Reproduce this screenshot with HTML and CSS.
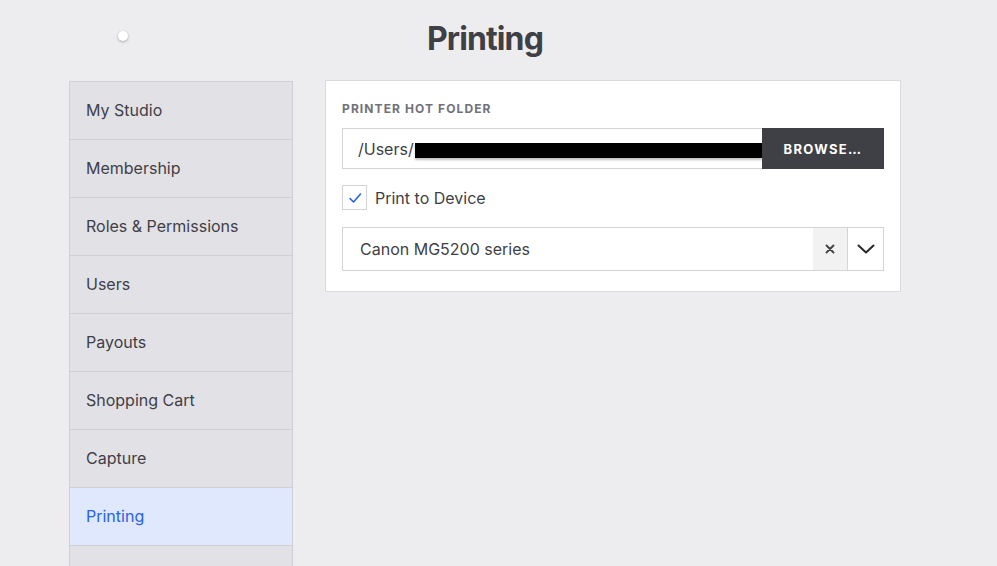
FILE: index.html
```html
<!DOCTYPE html>
<html lang="en">
<head>
    <meta charset="UTF-8">
    <meta name="viewport" content="width=device-width, initial-scale=1.0">
    <title>Printing</title>
    <link rel="stylesheet" href="styles.css">
</head>
<body>

<div class="page">
    <div class="header">
        <span class="knob"></span>
        <h1>Printing</h1>
    </div>

    <div class="layout">
        <ul class="sidebar">
            <li><a href="#">My Studio</a></li>
            <li><a href="#">Membership</a></li>
            <li><a href="#">Roles &amp; Permissions</a></li>
            <li><a href="#">Users</a></li>
            <li><a href="#">Payouts</a></li>
            <li><a href="#">Shopping Cart</a></li>
            <li><a href="#">Capture</a></li>
            <li class="active"><a href="#">Printing</a></li>
            <li></li>
        </ul>

        <div class="panel">
            <div class="field-label">Printer Hot Folder</div>
            <div class="path-row">
                <div class="path-input">/Users/<span class="redacted"></span></div>
                <button class="browse">Browse…</button>
            </div>

            <label class="check-row">
                <span class="checkbox">
                    <svg width="14" height="14" viewBox="0 0 14 14"><path d="M2 7.5 L5.5 11 L12.5 3" fill="none" stroke="#2563eb" stroke-width="1.6" stroke-linecap="round" stroke-linejoin="round"/></svg>
                </span>
                Print to Device
            </label>

            <div class="select">
                <div class="select-value">Canon MG5200 series</div>
                <div class="select-clear">
                    <svg width="10" height="10" viewBox="0 0 10 10"><path d="M1.5 1.5 L8.5 8.5 M8.5 1.5 L1.5 8.5" stroke="#3f3f46" stroke-width="1.8" stroke-linecap="round"/></svg>
                </div>
                <div class="select-arrow">
                    <svg width="18" height="10" viewBox="0 0 18 10"><path d="M1.5 1.5 L9 8.5 L16.5 1.5" fill="none" stroke="#27272a" stroke-width="2" stroke-linecap="round" stroke-linejoin="round"/></svg>
                </div>
            </div>
        </div>
    </div>
</div>

</body>
</html>
```

FILE: styles.css
```css
* {
    margin: 0;
    padding: 0;
    box-sizing: border-box;
}

body {
    font-family: Inter, "Noto Sans", sans-serif;
    background-color: #ededf0;
    color: #3f3f46;
    overflow: hidden;
}

.page {
    width: 832px;
    margin-left: 69px;
}

/* Cabeçalho */
.header {
    height: 80px;
    position: relative;
    display: flex;
    justify-content: center;
    align-items: flex-start;
}

.header h1 {
    font-size: 32px;
    font-weight: 700;
    color: #3f3f46;
    margin-top: 19px;
    letter-spacing: -0.9px;
}

.knob {
    position: absolute;
    left: 49px;
    top: 31px;
    width: 10px;
    height: 10px;
    border-radius: 50%;
    background: #fff;
    box-shadow: 0 1px 3px rgba(0, 0, 0, 0.3);
}

.layout {
    display: flex;
    align-items: flex-start;
    gap: 32px;
}

/* Menu lateral */
.sidebar {
    list-style: none;
    width: 224px;
    margin-top: 1px;
    background-color: #e2e1e6;
    border: 1px solid #cfcfd6;
    border-bottom: none;
}

.sidebar li {
    height: 58px;
    border-bottom: 1px solid #cfcfd6;
}

.sidebar a {
    display: flex;
    align-items: center;
    height: 100%;
    padding-left: 16px;
    padding-bottom: 2px;
    font-size: 16px;
    color: #3f3f46;
    text-decoration: none;
}

.sidebar li.active {
    background-color: #dfe8fc;
}

.sidebar li.active a {
    color: #2563eb;
}

/* Painel */
.panel {
    width: 576px;
    background-color: #fff;
    border: 1px solid #d9d9de;
    padding: 20px 16px 20px 16px;
}

.field-label {
    font-size: 12px;
    font-weight: 700;
    text-transform: uppercase;
    letter-spacing: 1.1px;
    color: #71717a;
    line-height: 16px;
    margin-bottom: 11px;
}

.path-row {
    display: flex;
    height: 41px;
}

.path-input {
    flex: 1;
    display: flex;
    align-items: center;
    padding-left: 15px;
    font-size: 16px;
    color: #3f3f46;
    border: 1px solid #d4d4d8;
    border-right: none;
    overflow: hidden;
    white-space: nowrap;
}

.redacted {
    display: inline-block;
    width: 360px;
    height: 15px;
    background: #000;
    margin-left: 1px;
    margin-top: 3px;
    box-shadow: 0 2px 2px rgba(0, 0, 0, 0.25);
}

.browse {
    width: 122px;
    border: none;
    background-color: #3f3f46;
    color: #fff;
    font-family: Inter, sans-serif;
    font-size: 13px;
    font-weight: 700;
    letter-spacing: 1.3px;
    text-transform: uppercase;
}

.check-row {
    display: flex;
    align-items: center;
    gap: 8px;
    margin-top: 16px;
    font-size: 16px;
    color: #3f3f46;
}

.checkbox {
    width: 25px;
    height: 25px;
    border: 1px solid #d4d4d8;
    display: flex;
    align-items: center;
    justify-content: center;
}

.select {
    display: flex;
    height: 44px;
    margin-top: 17px;
    border: 1px solid #d4d4d8;
}

.select-value {
    flex: 1;
    display: flex;
    align-items: center;
    padding-left: 17px;
    font-size: 16px;
    color: #3f3f46;
}

.select-clear {
    width: 35px;
    background-color: #f2f2f3;
    display: flex;
    align-items: center;
    justify-content: center;
    border-right: 1px solid #d4d4d8;
}

.select-arrow {
    width: 35px;
    display: flex;
    align-items: center;
    justify-content: center;
}
```
